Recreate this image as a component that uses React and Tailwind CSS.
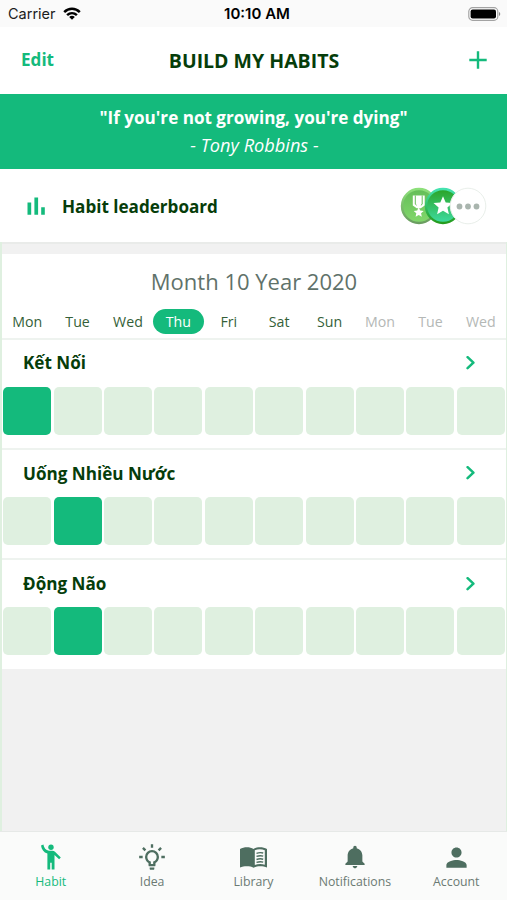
import { IoMdNotifications, IoMdPerson } from "react-icons/io";

const days = ["Mon", "Tue", "Wed", "Thu", "Fri", "Sat", "Sun", "Mon", "Tue", "Wed"];
const TODAY = 3;

const habits = [
  { name: "Kết Nối", done: [0] },
  { name: "Uống Nhiều Nước", done: [1] },
  { name: "Động Não", done: [1] },
];

function PersonWaveIcon({ className }) {
  return (
    <svg viewBox="0 0 20 26" fill="currentColor" className={className}>
      <circle cx="10" cy="3.2" r="2.7" />
      <path d="M0 1.4 2.4.6C3 4 4.7 6.3 8 6.7h3.5c1 0 1.7.3 2.5 1l5.8 5.7-1.7 1.8-4.6-4.3V25.5h-2.8v-6.700H9.2v6.700H6.4V9.500C2.700 8.300.5 5.300 0 1.400Z" />
    </svg>
  );
}

function BulbIcon({ className }) {
  return (
    <svg viewBox="0 0 24 24" fill="currentColor" className={className}>
      <path d="M20,11H23V13H20V11M1,11H4V13H1V11M13,1V4H11V1H13M4.92,3.5L7.05,5.64L5.63,7.05L3.5,4.93L4.92,3.5M16.95,5.63L19.07,3.5L20.5,4.93L18.37,7.05L16.95,5.63M12,6A6,6 0 0,1 18,12C18,14.22 16.79,16.16 15,17.2V19A1,1 0 0,1 14,20H10A1,1 0 0,1 9,19V17.2C7.21,16.16 6,14.22 6,12A6,6 0 0,1 12,6M14,21V22A1,1 0 0,1 13,23H11A1,1 0 0,1 10,22V21H14M11,18H13V15.87C14.73,15.43 16,13.86 16,12A4,4 0 0,0 12,8A4,4 0 0,0 8,12C8,13.86 9.27,15.43 11,15.87V18Z" />
    </svg>
  );
}

function BookIcon({ className }) {
  return (
    <svg viewBox="0 0 27 21" className={className}>
      <path d="M0 2C4-.3 10-.3 13.5 2 17-.3 23-.3 27 2v18.5c-4-1.7-10-1.7-13.5.2C10 18.8 4 18.8 0 20.5Z" fill="currentColor" />
      <path d="M14.8 3.2c3-1.3 7-1.3 10 0v14.500c-3-.9-7-.9-10 .3Z" fill="#fafbfa" />
      <path d="M16.5 6.3c2.2-.8 4.5-.9 6.7-.3M16.5 9.4c2.2-.8 4.5-.9 6.7-.3M16.5 12.5c2.2-.8 4.5-.9 6.7-.3M16.5 15.4c2.2-.7 4.5-.8 6.7-.3" fill="none" stroke="currentColor" strokeWidth="1.4" />
    </svg>
  );
}

const tabs = [
  { label: "Habit", icon: <PersonWaveIcon className="h-[26px] w-[20px]" />, active: true },
  { label: "Idea", icon: <BulbIcon className="size-[28px]" /> },
  { label: "Library", icon: <BookIcon className="mt-[2px] h-[21px] w-[27px]" /> },
  { label: "Notifications", icon: <IoMdNotifications className="size-[28px]" /> },
  { label: "Account", icon: <IoMdPerson className="mt-[1px] size-[27px]" /> },
];

function StatusBar() {
  return (
    <div className="flex h-[27px] items-center justify-between bg-[#fafafa] pl-2 pr-[6px] font-['Inter',sans-serif] text-[14.5px] text-[#1c1c1c]">
      <div className="flex w-[155px] items-center gap-[7px]">
        <span>Carrier</span>
        <svg viewBox="0 0 18 13" className="h-[13px] w-[18px]" fill="none" stroke="#000" strokeWidth="2.5">
          <path d="M1.2 5.2C5.7.7 12.3.7 16.8 5.2" />
          <path d="M4.1 8.2C7 5.5 11 5.5 13.9 8.2" />
          <path d="M9 12.7 6.2 9.9C7.8 8.4 10.2 8.4 11.8 9.9Z" fill="#000" stroke="none" />
        </svg>
      </div>
      <span className="pt-[2px] text-[15px] font-semibold text-black">10:10 AM</span>
      <div className="flex w-[150px] justify-end">
        <svg viewBox="0 0 33 14" className="h-[14px] w-[33px]">
          <rect x=".8" y=".7" width="29" height="12.6" rx="3.8" fill="#fff" stroke="#a3a3a3" strokeWidth="1.2" />
          <rect x="2.6" y="2.4" width="25.4" height="9.2" rx="2" fill="#000" />
          <path d="M31 5v4c1.7-.7 1.7-3.3 0-4Z" fill="#8a8a8a" />
        </svg>
      </div>
    </div>
  );
}

function Badges() {
  return (
    <svg viewBox="0 0 88 38" className="mt-[1px] h-[38px] w-[88px]">
      <defs>
        <linearGradient id="medal" x1="0" y1="0" x2="0" y2="1">
          <stop offset="0" stopColor="#64bd58" />
          <stop offset="1" stopColor="#83d86c" />
        </linearGradient>
        <linearGradient id="medalRim" x1="0" y1="0" x2="0" y2="1">
          <stop offset="0" stopColor="#8de07a" />
          <stop offset="1" stopColor="#6a9d60" />
        </linearGradient>
        <linearGradient id="star" x1="0" y1="0" x2="0" y2="1">
          <stop offset="0" stopColor="#2ba325" />
          <stop offset="1" stopColor="#3edca2" />
        </linearGradient>
        <linearGradient id="starRim" x1="0" y1="0" x2="0" y2="1">
          <stop offset="0" stopColor="#45e3b0" />
          <stop offset="1" stopColor="#259b1d" />
        </linearGradient>
      </defs>
      <circle cx="19" cy="19" r="17" fill="url(#medal)" stroke="url(#medalRim)" strokeWidth="2.4" />
      <path d="M12.8 8.500h11.900v9.900l-3.900 2.900h-4.100l-3.900-2.900Z" fill="#fff" />
      <path d="M15.300 8.500v8.700l1.300 1M22.200 8.500v8.700l-1.300 1" fill="none" stroke="#68bf5b" strokeWidth="1" />
      <path d="m18.700 20.200 1.500 3.200 3.500.5-2.600 2.400.7 3.400-3.100-1.700-3.100 1.700.7-3.400-2.600-2.400 3.500-.5Z" fill="#fff" />
      <circle cx="43" cy="19" r="17" fill="url(#star)" stroke="url(#starRim)" strokeWidth="2.4" />
      <path d="m43 9.200 2.700 6.300 6.800.6-5.100 4.500 1.500 6.700-5.900-3.500-5.900 3.500 1.500-6.700-5.100-4.500 6.800-.6Z" fill="#fff" />
      <circle cx="68" cy="19" r="17.8" fill="#fff" stroke="#e9efea" strokeWidth="1" />
      <circle cx="59.5" cy="19.5" r="2.9" fill="#a9b5ae" />
      <circle cx="68" cy="19.5" r="2.9" fill="#a9b5ae" />
      <circle cx="76.5" cy="19.5" r="2.9" fill="#a9b5ae" />
    </svg>
  );
}

function HabitRow({ name, done }) {
  return (
    <div className="h-[110.4px] border-t-2 border-[#eef3ef] bg-white">
      <div className="flex h-[47px] items-center justify-between pl-[21px] pr-[30px]">
        <span className="text-[17.1px] font-bold text-[#063d0a]">{name}</span>
        <svg viewBox="0 0 10 14" className="h-[14px] w-[10px]" fill="none" stroke="#14ba7c" strokeWidth="2.5">
          <path d="m1.6 1.2 5.8 5.5-5.8 5.5" strokeLinecap="round" strokeLinejoin="round" />
        </svg>
      </div>
      <div className="grid grid-cols-10 gap-x-[2.4px] px-[1.2px]">
        {days.map((_, i) => (
          <div
            key={i}
            className={`h-[48px] rounded-[5px] ${done.includes(i) ? "bg-[#14ba7c]" : "bg-[#dff0e0]"}`}
          />
        ))}
      </div>
    </div>
  );
}

export default function App() {
  return (
    <main className="flex h-[900px] w-[507px] flex-col overflow-hidden bg-[#f1f1f1] font-['Open_Sans',sans-serif]">
      <StatusBar />

      <header className="flex h-[66.5px] items-center justify-between bg-white pl-[21px] pr-[20px]">
        <span className="w-[100px] text-[17.1px] font-bold text-[#14ba7c]">Edit</span>
        <h1 className="text-[19.5px] font-bold text-[#063d0a]">BUILD MY HABITS</h1>
        <div className="flex w-[100px] justify-end">
          <svg viewBox="0 0 18 18" className="size-[18px]" stroke="#14ba7c" strokeWidth="2.4">
            <path d="M9 .3v17.4M.3 9h17.4" />
          </svg>
        </div>
      </header>

      <section className="flex h-[75.5px] flex-col items-center bg-[#14ba7c] pt-[10.5px] text-[17.1px] leading-[28px] text-white">
        <p className="font-bold">"If you're not growing, you're dying"</p>
        <p className="-mt-[1px] pl-[2px] text-[18.2px] italic">- Tony Robbins -</p>
      </section>

      <section className="flex h-[72.5px] items-center bg-white pl-[27px] pr-[19px]">
        <svg viewBox="0 0 18 18" className="mt-[1px] h-[18px] w-[18px]" fill="#14ba7c">
          <path d="M.5 5.5h3.7V17.8h-3.7ZM7.4.5h3.7V17.8h-3.7ZM14.2 10.3h3.6V17.8h-3.6Z" />
        </svg>
        <span className="ml-[17px] flex-1 pt-[3px] text-[17.1px] font-bold text-[#063d0a]">Habit leaderboard</span>
        <Badges />
      </section>

      {/* calendar */}
      <section className="flex-1 border-l-2 border-r border-[#dff0e0] bg-[#f1f1f1]">
        <div className="h-[12px] border-t-2 border-[#e9ebe9]" />
        <div className="bg-white">
          <h2 className="flex h-[55px] items-center justify-center text-[22px] text-[#5f726a]">Month 10 Year 2020</h2>
          <div className="grid h-[29px] grid-cols-10 items-start text-center text-[14.2px]">
            {days.map((day, i) => (
              <div
                key={i}
                className={`h-[25px] rounded-full leading-[26px] ${
                  i === TODAY ? "bg-[#14ba7c] text-white" : i > 6 ? "text-[#b4b8b6]" : "text-[#355f38]"
                }`}
              >
                {day}
              </div>
            ))}
          </div>
        </div>
        {habits.map((habit) => (
          <HabitRow key={habit.name} name={habit.name} done={habit.done} />
        ))}
      </section>

      <nav className="grid h-[69px] grid-cols-5 border-t border-[#e6e9e7] bg-[#fafbfa]">
        {tabs.map((tab) => (
          <div key={tab.label} className="flex flex-col items-center pt-[9px]">
            <div className={`flex h-[31px] items-center ${tab.active ? "text-[#14ba7c]" : "text-[#4e6e60]"}`}>
              {tab.icon}
            </div>
            <span className={`text-[12.3px] leading-[19px] ${tab.active ? "text-[#14ba7c]" : "text-[#6b7a73]"}`}>
              {tab.label}
            </span>
          </div>
        ))}
      </nav>
    </main>
  );
}
